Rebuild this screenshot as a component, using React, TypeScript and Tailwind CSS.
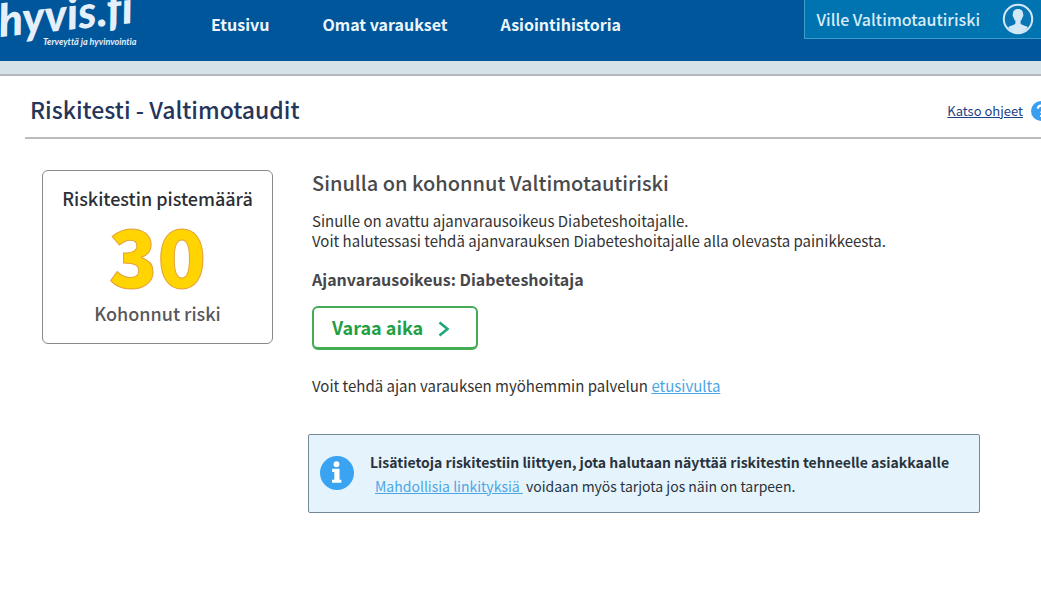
import React from "react";

const NAV = [
  { label: "Etusivu", href: "#etusivu" },
  { label: "Omat varaukset", href: "#varaukset" },
  { label: "Asiointihistoria", href: "#historia" },
];

function Logo() {
  return (
    <a href="#etusivu" aria-label="hyvis.fi" className="block w-[160px] shrink-0 overflow-hidden">
      <svg viewBox="0 0 160 61" className="block h-[61px] w-[160px] [font-variant-ligatures:none]" fill="#e4effa">
        <text
          x="0"
          y="37"
          transform="rotate(-6 0 37)"
          fontFamily="Lato, sans-serif"
          fontSize="45"
          fontWeight="900"
          fontStyle="italic"
        >
          hyvis.fi
        </text>
        <text
          x="43"
          y="45"
          fontFamily="Lato, sans-serif"
          fontSize="9"
          fontWeight="700"
          fontStyle="italic"
        >
          Terveyttä ja hyvinvointia
        </text>
      </svg>
    </a>
  );
}

function UserIcon() {
  return (
    <svg viewBox="0 0 32 32" className="size-8 shrink-0" aria-hidden="true">
      <circle cx="16" cy="16" r="14.200" fill="#0a76b4" stroke="#d3e8f6" strokeWidth="2" />
      <path
        d="M16 6c-3.600 0-5.200 2.300-5.100 5.400-.6.500-.3 2 .5 2.600.4 1.900 1.100 3 2 3.800v2.700c-.5 1.500-4.600 1.900-7.200 3.700C8.500 28 12 30 16 30s7.500-2 9.800-5.800c-2.600-1.800-6.700-2.200-7.200-3.700v-2.700c.9-.8 1.600-1.900 2-3.800.8-.6 1.100-2.100.5-2.600.1-3.100-1.500-5.400-5.100-5.400z"
        fill="#d3e8f6"
      />
    </svg>
  );
}

function InfoIcon() {
  return (
    <svg viewBox="0 0 34 34" className="size-[34px] shrink-0" aria-hidden="true">
      <circle cx="17" cy="17" r="17" fill="#3aa3f2" />
      <circle cx="16.500" cy="8.200" r="2.900" fill="#fff" />
      <path d="M12.200 12.800h7.300v10.900h1.900v3.100h-9.400v-3.100h2.300v-7.700h-2.100z" fill="#fff" />
    </svg>
  );
}

export default function App() {
  return (
    <div className="min-h-screen overflow-x-hidden bg-white font-['Noto_Sans_CJK_SC','Noto_Sans',sans-serif] text-[#333]">
      <header className="flex h-[61px] items-start bg-[#00569b]">
        <Logo />
        <nav className="flex flex-1 gap-[53px] pt-3 pl-[51px]">
          {NAV.map((item) => (
            <a key={item.label} href={item.href} className="text-[16px] leading-6 font-bold whitespace-nowrap text-[#eef6fc]">
              {item.label}
            </a>
          ))}
        </nav>
        <button
          type="button"
          className="flex h-[39px] items-center gap-[22px] border-b border-l border-[#3f9bcb] bg-[#0074b1] pr-[7px] pl-3 text-[16px] leading-6 font-medium whitespace-nowrap text-[#d8ecf8]"
        >
          Ville Valtimotautiriski
          <UserIcon />
        </button>
      </header>
      <div className="h-[15px] border-b-2 border-[#b2b8bd] bg-[#d5e2e6]" />

      <main className="pl-[25px]">
        <div className="flex h-[63px] items-center justify-between border-b-2 border-[#bcbcbe] pt-2 pl-[5px]">
          <h1 className="pb-1 text-[23px] leading-8 font-medium text-[#26355a]">Riskitesti - Valtimotaudit</h1>
          <a href="#ohjeet" className="-mr-2.5 flex items-center gap-2 text-[13px] leading-5 text-[#1d3f85]">
            <span className="underline">Katso ohjeet</span>
            <svg viewBox="0 0 20 20" className="size-5" aria-hidden="true">
              <circle cx="10" cy="10" r="10" fill="#3b9ff0" />
              <path d="M6.800 7.600c.2-2 1.500-3 3.300-3s3.200 1 3.200 2.700c0 2.300-2.900 2.300-2.900 4.700M10.300 14v2" fill="none" stroke="#fff" strokeWidth="2.200" />
            </svg>
          </a>
        </div>

        <div className="flex items-start pt-[31px] pr-[61px] pl-[17px]">
          <section className="flex h-[174px] w-[231px] shrink-0 flex-col items-center rounded-md border border-[#88898b] pt-[15px]">
            <h2 className="text-[18px] leading-6 font-medium text-[#2d2f36]">Riskitestin pistemäärä</h2>
            <p className="pt-[9px] pb-3.5 text-[80px] leading-[68px] font-black text-[#ffd400] [-webkit-text-stroke:1px_#e5a13a]">30</p>
            <p className="text-[18px] leading-6 font-medium text-[#58585a]">Kohonnut riski</p>
          </section>

          <section className="min-w-0 flex-1 pt-px pl-[35px]">
            <div className="pl-1">
              <h2 className="text-[20px] leading-6 font-medium text-[#4a4a4c]">Sinulla on kohonnut Valtimotautiriski</h2>
              <p className="pt-4 text-[15px] leading-5">
                Sinulle on avattu ajanvarausoikeus Diabeteshoitajalle.
                <br />
                Voit halutessasi tehdä ajanvarauksen Diabeteshoitajalle alla olevasta painikkeesta.
              </p>
              <h3 className="pt-4 text-[16px] leading-6 font-bold text-[#47474a]">Ajanvarausoikeus: Diabeteshoitaja</h3>
              <button
                type="button"
                className="mt-[15px] flex h-11 w-[166px] items-center gap-[15px] rounded-md border-2 border-b-[3px] border-[#45ac55] pb-0.5 pl-[18px] text-[18px] leading-6 font-bold text-[#1fa045]"
              >
                Varaa aika
                <svg viewBox="0 0 12 16" className="mt-1 h-4 w-3" fill="none" stroke="#1ea777" strokeWidth="2.600" aria-hidden="true">
                  <path d="M1.500 1.500 9.500 8l-8 6.500" />
                </svg>
              </button>
              <p className="pt-6 text-[15px] leading-6">
                Voit tehdä ajan varauksen myöhemmin palvelun{" "}
                <a href="#etusivu" className="text-[#4ba6e6] underline">etusivulta</a>
              </p>
            </div>

            <aside className="mt-9 flex min-h-[79px] items-center gap-4 rounded-xs border border-[#748a99] bg-[#e5f4fc] pr-2 pb-0.5 pl-[11px] text-[#2a333c]">
              <InfoIcon />
              <div className="pt-0.5 text-[14px] leading-6">
                <p className="font-bold">Lisätietoja riskitestiin liittyen, jota halutaan näyttää riskitestin tehneelle asiakkaalle</p>
                <p className="pl-[5px]">
                  <a href="#linkit" className="text-[#4ba6e6] underline">Mahdollisia linkityksiä&nbsp;</a> voidaan myös tarjota jos näin on tarpeen.
                </p>
              </div>
            </aside>
          </section>
        </div>
      </main>
    </div>
  );
}
